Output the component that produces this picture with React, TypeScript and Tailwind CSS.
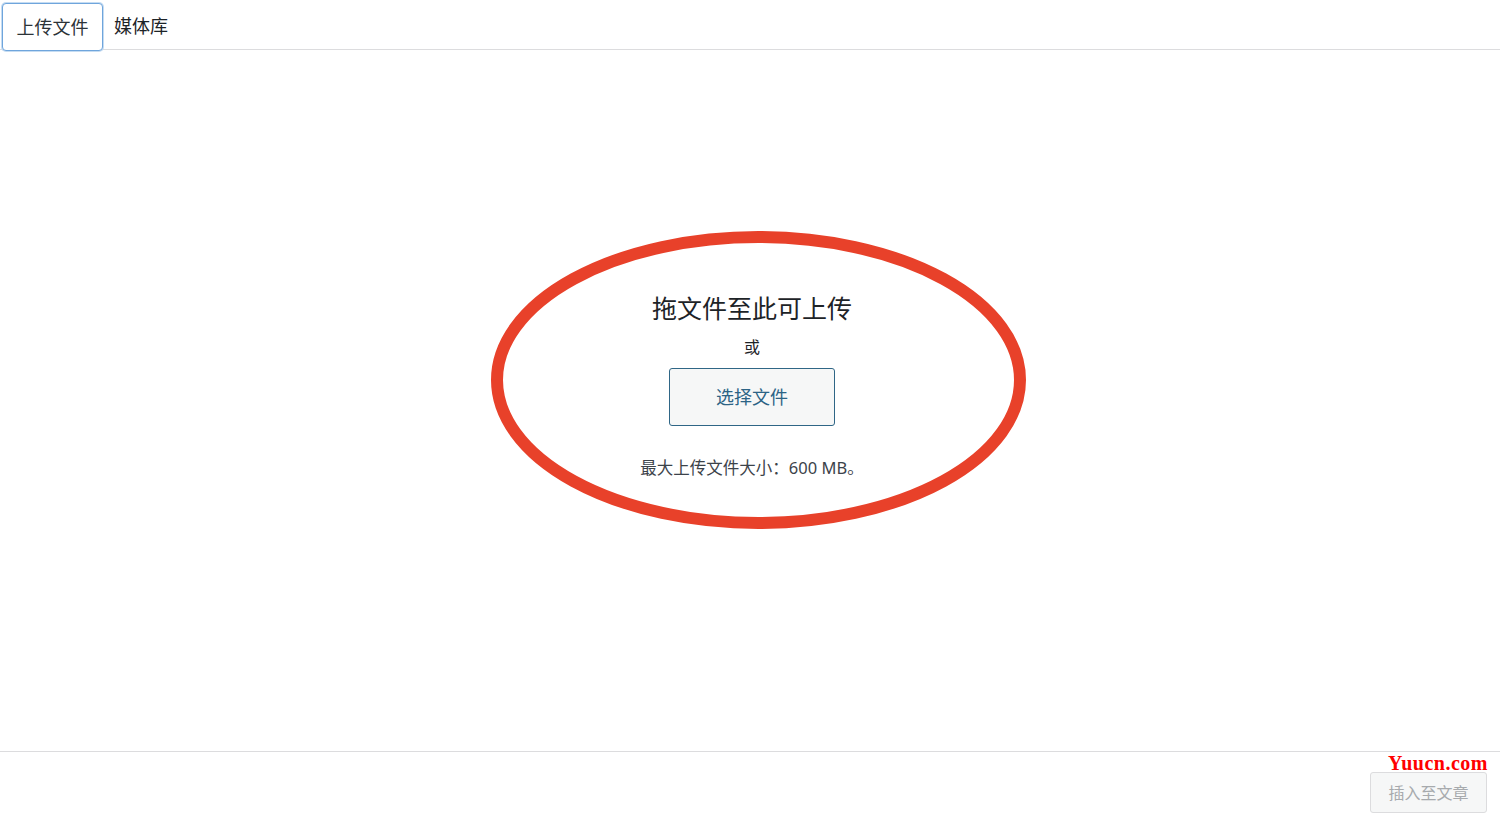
import React from "react";

const font = { fontFamily: '"Noto Sans", "Noto Sans CJK SC", sans-serif' };

export default function App() {
  return (
    <div className="relative flex h-[818px] w-[1500px] flex-col bg-white text-[#1d2327]" style={font}>
      {/* tabs */}
      <div className="flex h-[50px] items-stretch border-b border-[#dcdcde] pl-[2px] pt-[3px]">
        <div className="-mb-[2px] flex w-[101px] items-center justify-center rounded-[4px] border border-[#6fa5dc] bg-white text-[18px] text-[#2c3338] shadow-[0_0_0_1px_#c5dcf2]">
          上传文件
        </div>
        <div className="flex items-center pl-[11px] text-[18px] text-[#1d2327]">媒体库</div>
      </div>

      {/* drop zone */}
      <div className="flex flex-1 flex-col items-center pl-[4px] pt-[242px]">
        <h2 className="text-[25px] leading-[32px] text-[#1d2327]">拖文件至此可上传</h2>
        <p className="mt-[11px] text-[16px] leading-[24px] text-[#1d2327]">或</p>
        <button className="mt-[9px] h-[58px] w-[166px] rounded-[3px] border border-[#2f6686] bg-[#f6f7f7] text-[18px] text-[#2c6385]">
          选择文件
        </button>
        <p className="mt-[30px] text-[16.5px] leading-[24px] text-[#3c434a]">最大上传文件大小：600 MB。</p>
      </div>

      {/* footer */}
      <div className="relative flex h-[67px] items-start justify-end border-t border-[#dcdcde] pr-[13px] pt-[20px]">
        <span
          className="absolute right-[12px] top-[-4px] text-[20px] font-bold tracking-[0.5px] text-[#ff0000]"
          style={{ fontFamily: '"Liberation Serif", serif' }}
        >
          Yuucn.com
        </span>
        <button className="h-[41px] w-[117px] rounded-[3px] border border-[#dcdcde] bg-[#f6f7f7] text-[16px] text-[#a7aaad]">
          插入至文章
        </button>
      </div>

      {/* annotation ellipse */}
      <svg className="pointer-events-none absolute left-0 top-0" width="1500" height="818">
        <ellipse cx="758.5" cy="380" rx="261.5" ry="143" fill="none" stroke="#e8412a" strokeWidth="12" />
      </svg>
    </div>
  );
}
